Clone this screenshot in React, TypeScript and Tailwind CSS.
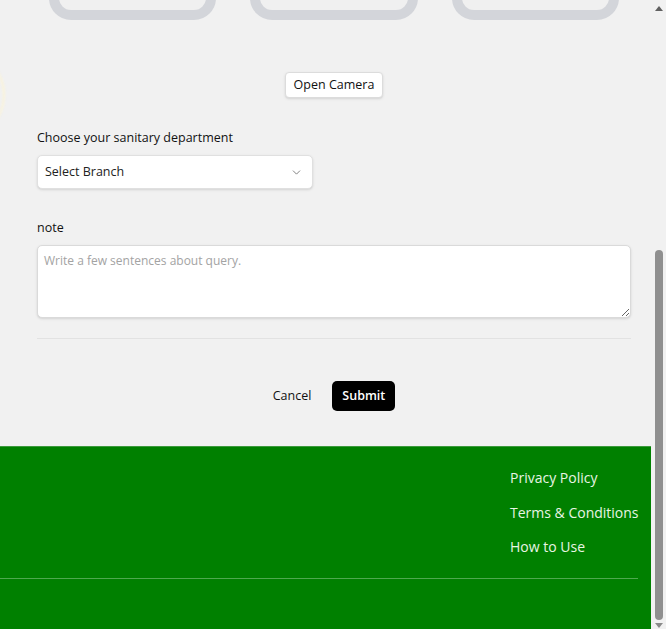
import { ChevronDown } from "lucide-react";

const footerLinks = ["Privacy Policy", "Terms & Conditions", "How to Use"];

const UploadCard = () => {
  return <div className="h-[150px] rounded-[22px] border-[10px] border-[#d3d5da] bg-[#f0f0f0]"></div>;
};

// the window's classic scrollbar, drawn since the page is shown scrolled to its end
const ScrollBar = () => {
  return (
    <div className="flex h-full w-[15px] shrink-0 flex-col items-center bg-[#f1f1f1]">
      <div className="mt-[6px] h-0 w-0 border-x-[4px] border-b-[5px] border-x-transparent border-b-[#606060]"></div>
      <div className="flex-1"></div>
      <div className="h-[370px] w-[8px] rounded-full bg-[#8f8f8f]"></div>
      <div className="mt-[3px] h-0 w-0 border-x-[4px] border-t-[5px] border-x-transparent border-t-[#8a8a8a]"></div>
      <div className="h-[1px]"></div>
    </div>
  );
};

export default function App() {
  return (
    <div className="flex h-screen overflow-hidden bg-[#f1f1f1] font-['Open_Sans',sans-serif] text-[#111]">
      <div className="relative flex min-w-0 flex-1 flex-col justify-end overflow-hidden">
        <div className="pointer-events-none absolute -left-[150px] top-[50px] h-[90px] w-[155px] rounded-full border-r-[2px] border-[#fbf4d9] blur-[1px]"></div>

        <main className="pl-[37px] pr-[20px]">
          <div className="grid grid-cols-3 gap-[34px] px-[12px]">
            <UploadCard />
            <UploadCard />
            <UploadCard />
          </div>

          <div className="mt-[52px] flex justify-center">
            <button className="h-[26px] rounded-[4px] border border-[#dcdcdc] bg-white px-[8px] text-[12.5px] font-medium text-[#111] shadow-sm">
              Open Camera
            </button>
          </div>

          <label className="mt-[31px] block text-[12.5px] leading-[18px] text-[#111]">
            Choose your sanitary department
          </label>
          <div className="mt-[8px] flex h-[34px] w-[276px] items-center justify-between rounded-[5px] border border-[#e0e0e0] bg-white pl-[7px] pr-[9px] shadow-sm">
            <span className="text-[12.5px] text-[#222]">Select Branch</span>
            <ChevronDown size={13} strokeWidth={1.5} className="text-[#666]" />
          </div>

          <label className="mt-[30px] block text-[12.5px] leading-[18px] text-[#111]">note</label>
          <textarea
            className="mt-[8px] block h-[73px] w-full rounded-[5px] border border-[#dadada] bg-white px-[6px] py-[6px] text-[12px] shadow-sm outline-none placeholder:text-[#a3a3a3]"
            placeholder="Write a few sentences about query."
          ></textarea>

          <div className="mt-[20px] h-px w-full bg-[#e2e2e2]"></div>

          <div className="mt-[42px] flex items-center justify-center gap-[21px] pb-[35px]">
            <button className="text-[12.5px] font-medium text-[#111]">Cancel</button>
            <button className="h-[30px] rounded-[5px] bg-black px-[10px] text-[12.5px] font-semibold text-white">
              Submit
            </button>
          </div>
        </main>

        <footer className="shrink-0 border-t border-[#3d9a3d] bg-[#008000] pr-[13px]">
          <div className="flex justify-end pt-[20px] pb-[21px]">
            <ul className="flex w-[128px] flex-col gap-[13.5px]">
              {footerLinks.map((link, idx) => (
                <li key={idx} className="leading-[21px]">
                  <a href="#" className="block whitespace-nowrap text-[14px] font-medium leading-[21px] text-[#e8f5e4]">
                    {link}
                  </a>
                </li>
              ))}
            </ul>
          </div>
          <div className="h-px w-full bg-[#4ea94e]"></div>
          <div className="h-[50px]"></div>
        </footer>
      </div>
      <ScrollBar />
    </div>
  );
}
